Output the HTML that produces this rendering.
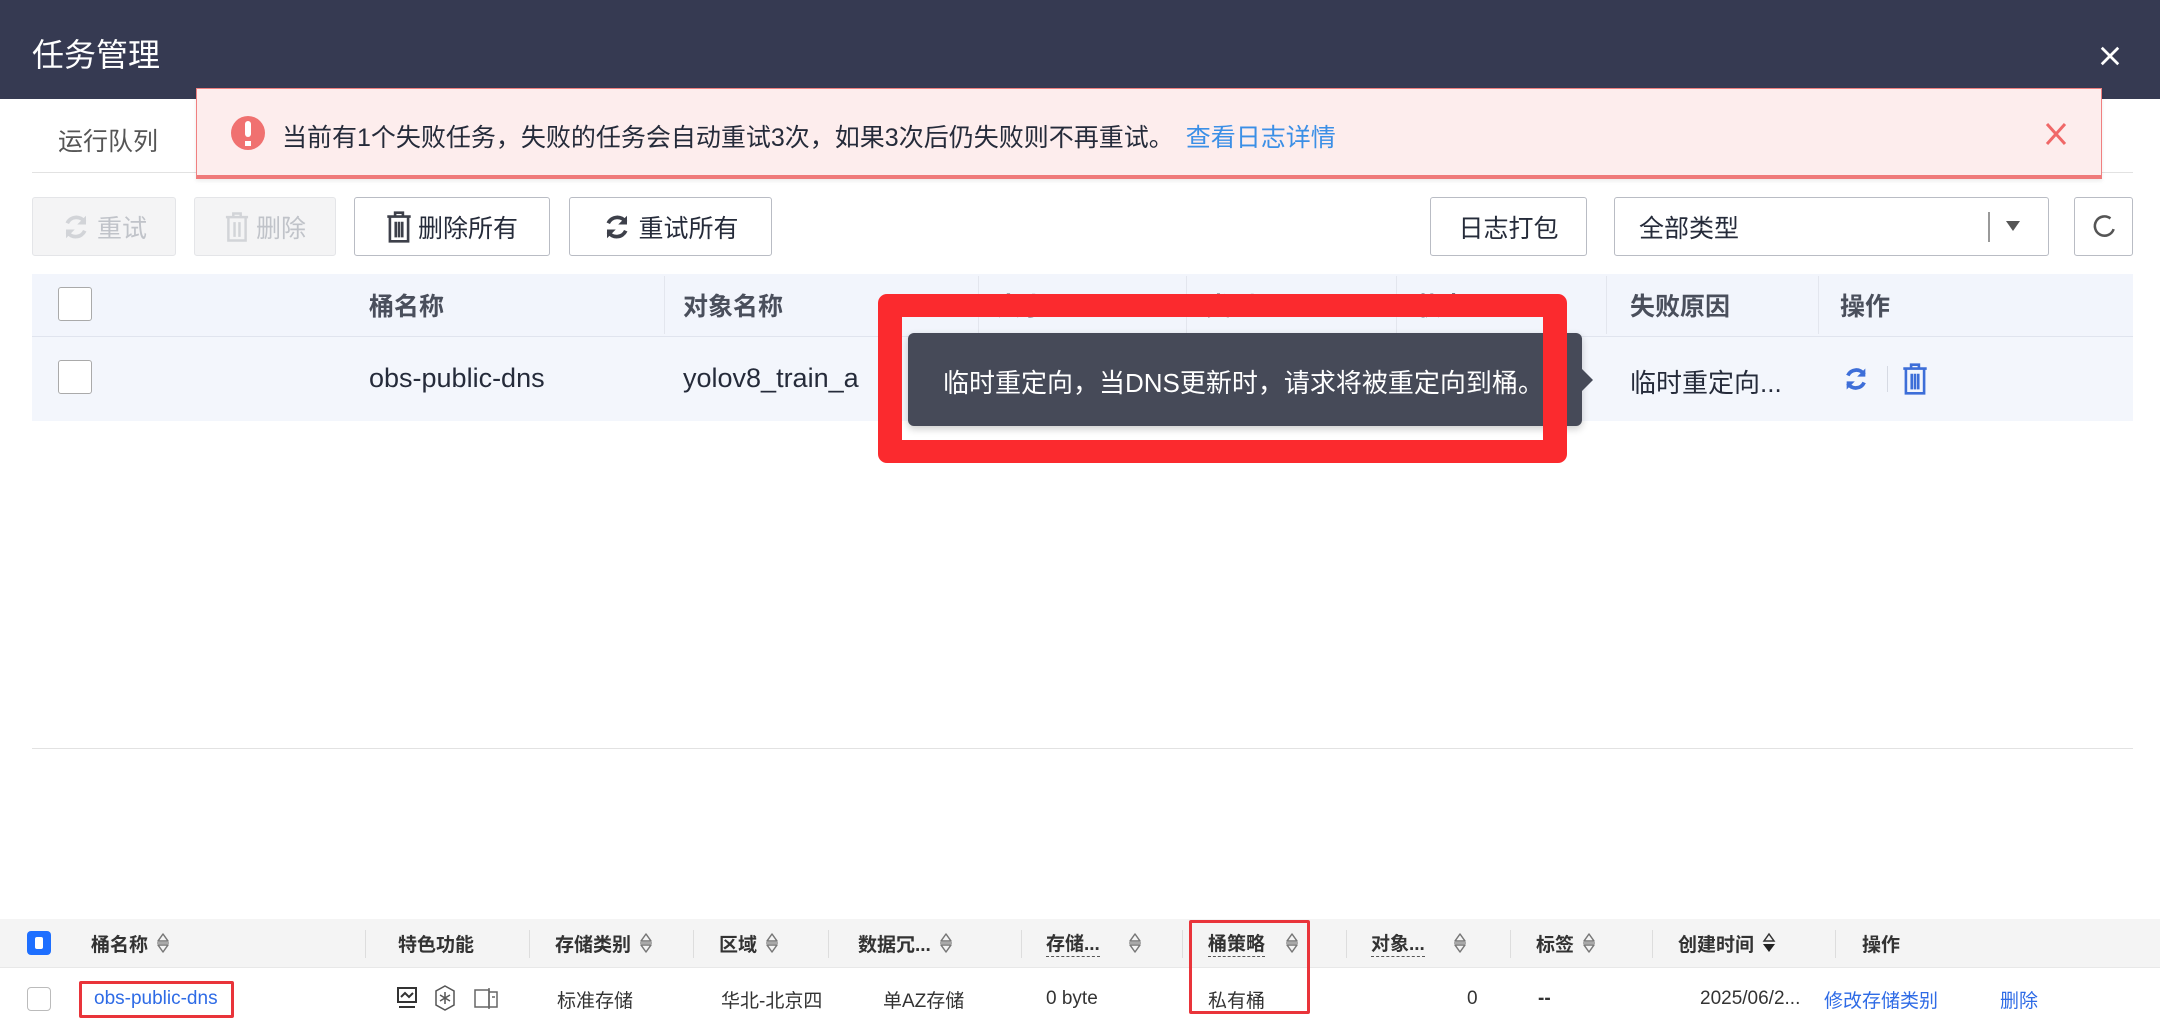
<!DOCTYPE html>
<html><head><meta charset="utf-8"><style>
*{margin:0;padding:0;box-sizing:border-box}
body{width:2160px;height:1021px;position:relative;overflow:hidden;background:#fff;font-family:"Liberation Sans","Noto Sans CJK SC",sans-serif;color:#252b3a}
.a{position:absolute;white-space:nowrap}
.btn{position:absolute;top:197px;height:59px;border:1.5px solid #b9bcc4;border-radius:3px;background:#fff;font-size:25px;color:#252b3a;display:flex;align-items:center;justify-content:center;gap:6px}
.dis{background:#f4f4f5;border-color:#e4e5e8;color:#c0c3c9}
.th{position:absolute;top:274px;height:62px;display:flex;align-items:center;font-size:25px;font-weight:bold;color:#4a4f5c}
.vd{position:absolute;top:276px;width:1px;height:58px;background:#e3e6ee}
.bh{position:absolute;top:919px;height:48px;display:flex;align-items:center;font-size:19px;font-weight:bold;color:#333;gap:8px}
.bd{position:absolute;top:930px;width:1px;height:28px;background:#ddd}
.br{position:absolute;top:980px;height:38px;display:flex;align-items:center;font-size:19px;color:#333}
.dash{border-bottom:1.5px dashed #555}
.s{display:inline-block;width:14px;height:22px}
</style></head><body>
<svg width="0" height="0" style="position:absolute"><defs><symbol id="srt" viewBox="0 0 14 22"><path d="M2 9L7 2L12 9ZM2 13L7 20L12 13Z" fill="none" stroke="#777" stroke-width="1.5" stroke-linejoin="round"/><path d="M1 11h12" stroke="#777" stroke-width="1.2"/></symbol></defs></svg>
<div class="a" style="left:0;top:0;width:2160px;height:99px;background:#363a52"></div>
<div class="a" style="left:32px;top:30px;font-size:32px;color:#fff">任务管理</div>
<svg class="a" style="left:2099px;top:45px" width="22" height="22" viewBox="0 0 24 24"><path d="M3 3L21 21M21 3L3 21" stroke="#fff" stroke-width="3"/></svg>

<div class="a" style="left:58px;top:122px;font-size:25px;color:#555">运行队列</div>
<div class="a" style="left:32px;top:172px;width:2101px;height:1px;background:#e2e2e2"></div>

<div class="a" style="left:196px;top:88px;width:1906px;height:91px;background:#fdeded;border:1.5px solid #f08080;border-bottom:4px solid #ef7a7a;box-shadow:0 2px 4px rgba(0,0,0,.08)"></div>
<div class="a" style="left:231px;top:116px;width:34px;height:34px;border-radius:50%;background:#f07170"></div>
<div class="a" style="left:245px;top:121px;width:6px;height:16px;background:#fff;border-radius:3px"></div>
<div class="a" style="left:245px;top:141px;width:6px;height:5px;background:#fff"></div>
<div class="a" style="left:282px;top:118px;font-size:25px;color:#252b3a">当前有1个失败任务，失败的任务会自动重试3次，如果3次后仍失败则不再重试。<span style="color:#3b8fe6;margin-left:12px">查看日志详情</span></div>
<svg class="a" style="left:2045px;top:122px" width="22" height="24" viewBox="0 0 22 24"><path d="M2 2L20 22M20 2L2 22" stroke="#f06868" stroke-width="3"/></svg>

<div class="btn dis" style="left:32px;width:144px"><svg width="30" height="30" viewBox="0 0 24 24"><path d="M19 8A8 8 0 0 0 5 9M5 16a8 8 0 0 0 14-1" stroke="#d2d4d8" stroke-width="3" fill="none"/><path d="M20 3v7h-7zM4 21v-7h7z" fill="#d2d4d8"/></svg>重试</div>
<div class="btn dis" style="left:194px;width:142px"><svg width="26" height="32" viewBox="0 0 20 26"><path d="M1 5h18M7 5V2h6v3M3 6v18h14V6M8 9v12M12 9v12" stroke="#d2d4d8" stroke-width="2" fill="none"/></svg>删除</div>
<div class="btn" style="left:354px;width:196px"><svg width="26" height="34" viewBox="0 0 20 26"><path d="M1 5h18M7 5V2h6v3M3 6v18h14V6M7.5 9v12M10 9v12M12.5 9v12" stroke="#3d404a" stroke-width="2" fill="none"/></svg>删除所有</div>
<div class="btn" style="left:569px;width:203px"><svg width="30" height="30" viewBox="0 0 24 24"><path d="M19 8A8 8 0 0 0 5 9M5 16a8 8 0 0 0 14-1" stroke="#3d404a" stroke-width="3" fill="none"/><path d="M20 3v7h-7zM4 21v-7h7z" fill="#3d404a"/></svg>重试所有</div>
<div class="btn" style="left:1430px;width:157px">日志打包</div>
<div class="btn" style="left:1614px;width:435px;justify-content:flex-start;padding-left:24px">全部类型</div>
<div class="a" style="left:1988px;top:212px;width:2px;height:30px;background:#999"></div>
<svg class="a" style="left:2006px;top:221px" width="14" height="10"><path d="M0 0h14L7 10z" fill="#555"/></svg>
<div class="btn" style="left:2074px;width:59px"><svg width="26" height="30" viewBox="0 0 24 28"><path d="M18 6A9 9 0 1 0 21 16" stroke="#555" stroke-width="2.4" fill="none"/></svg></div>

<div class="a" style="left:32px;top:274px;width:2101px;height:62px;background:#f2f5fc"></div>
<div class="a" style="left:32px;top:336px;width:2101px;height:1.5px;background:#e0e4ee"></div>
<div class="a" style="left:32px;top:337px;width:2101px;height:84px;background:#f3f6fc"></div>
<div class="a" style="left:58px;top:287px;width:34px;height:34px;border:1.5px solid #aaa;border-radius:3px;background:#fff"></div>
<div class="a" style="left:58px;top:360px;width:34px;height:34px;border:1.5px solid #aaa;border-radius:3px;background:#fff"></div>
<div class="vd" style="left:664px"></div><div class="vd" style="left:978px"></div><div class="vd" style="left:1186px"></div><div class="vd" style="left:1396px"></div><div class="vd" style="left:1606px"></div><div class="vd" style="left:1818px"></div>
<div class="th" style="left:369px">桶名称</div>
<div class="th" style="left:683px">对象名称</div>
<div class="th" style="left:996px">大小</div>
<div class="th" style="left:1206px">类型</div>
<div class="th" style="left:1416px">状态</div>
<div class="th" style="left:1630px">失败原因</div>
<div class="th" style="left:1840px">操作</div>
<div class="a" style="left:369px;top:363px;font-size:27px;color:#252b3a">obs-public-dns</div>
<div class="a" style="left:683px;top:363px;font-size:27px;color:#252b3a">yolov8_train_a</div>
<div class="a" style="left:1630px;top:363px;font-size:26px;color:#252b3a">临时重定向...</div>
<svg class="a" style="left:1842px;top:364px" width="28" height="30" viewBox="0 0 24 24"><path d="M19 8A8 8 0 0 0 5 9M5 16a8 8 0 0 0 14-1" stroke="#3d6ed8" stroke-width="3.2" fill="none"/><path d="M20 3v7h-7zM4 21v-7h7z" fill="#3d6ed8"/></svg>
<div class="a" style="left:1887px;top:366px;width:1px;height:26px;background:#d6dae3"></div>
<svg class="a" style="left:1902px;top:362px" width="26" height="34" viewBox="0 0 20 26"><path d="M1 5h18M7 5V2h6v3M3 6v18h14V6M7.5 9v12M10 9v12M12.5 9v12" stroke="#3d6ed8" stroke-width="2" fill="none"/></svg>

<div class="a" style="left:908px;top:333px;width:674px;height:93px;background:#464a58;border-radius:6px;box-shadow:0 3px 8px rgba(0,0,0,.2)"></div>
<svg class="a" style="left:1581px;top:368px" width="12" height="24"><path d="M0 0L12 12L0 24z" fill="#464a58"/></svg>
<div class="a" style="left:943px;top:363px;font-size:26px;color:#fff">临时重定向，当DNS更新时，请求将被重定向到桶。</div>
<div class="a" style="left:878px;top:294px;width:689px;height:169px;border:24px solid #fb2a2e;border-top-width:23px;border-bottom-width:23px;border-radius:9px"></div>

<div class="a" style="left:32px;top:748px;width:2101px;height:1px;background:#e2e2e2"></div>

<div class="a" style="left:0;top:919px;width:2160px;height:48px;background:#f4f4f4"></div>
<div class="a" style="left:0;top:967px;width:2160px;height:1px;background:#e8e8e8"></div>
<div class="a" style="left:27px;top:931px;width:24px;height:24px;background:#1e6fff;border-radius:4px"></div>
<div class="a" style="left:35px;top:937px;width:8px;height:12px;background:#fff;border-radius:2px"></div>
<div class="bd" style="left:365px"></div><div class="bd" style="left:529px"></div><div class="bd" style="left:693px"></div><div class="bd" style="left:828px"></div><div class="bd" style="left:1021px"></div><div class="bd" style="left:1182px"></div><div class="bd" style="left:1346px"></div><div class="bd" style="left:1510px"></div><div class="bd" style="left:1652px"></div><div class="bd" style="left:1835px"></div>
<div class="bh" style="left:91px">桶名称 <svg class="s"><use href="#srt"/></svg></div>
<div class="bh" style="left:398px">特色功能</div>
<div class="bh" style="left:555px">存储类别 <svg class="s"><use href="#srt"/></svg></div>
<div class="bh" style="left:719px">区域 <svg class="s"><use href="#srt"/></svg></div>
<div class="bh" style="left:858px">数据冗... <svg class="s"><use href="#srt"/></svg></div>
<div class="bh" style="left:1046px"><span class="dash">存储...</span> <svg class="s" style="margin-left:20px"><use href="#srt"/></svg></div>
<div class="bh" style="left:1208px"><span class="dash">桶策略</span> <svg class="s" style="margin-left:12px"><use href="#srt"/></svg></div>
<div class="bh" style="left:1371px"><span class="dash">对象...</span> <svg class="s" style="margin-left:20px"><use href="#srt"/></svg></div>
<div class="bh" style="left:1536px">标签 <svg class="s"><use href="#srt"/></svg></div>
<div class="bh" style="left:1678px">创建时间 <svg class="s" viewBox="0 0 14 22"><path d="M2 9L7 2L12 9Z" fill="none" stroke="#333" stroke-width="1.5"/><path d="M1 12L7 20L13 12Z" fill="#222"/></svg></div>
<div class="bh" style="left:1862px">操作</div>

<div class="a" style="left:27px;top:987px;width:24px;height:24px;border:1.5px solid #bbb;border-radius:4px;background:#fff"></div>
<div class="br" style="left:94px;color:#2e6be6">obs-public-dns</div>
<div class="a" style="left:79px;top:981px;width:155px;height:37px;border:3px solid #e9343a;border-radius:2px"></div>
<svg class="a" style="left:396px;top:986px" width="22" height="24" viewBox="0 0 22 24"><rect x="2" y="2" width="18" height="14" stroke="#333" stroke-width="2" fill="none"/><path d="M5 11l4-4 4 4 4-4M3 21h16" stroke="#333" stroke-width="2" fill="none"/></svg>
<svg class="a" style="left:434px;top:985px" width="22" height="26" viewBox="0 0 22 26"><path d="M11 1l9 5v14l-9 5-9-5V6z" stroke="#555" stroke-width="1.5" fill="none"/><path d="M11 7v12M6 10l10 6M16 10L6 16" stroke="#555" stroke-width="1.5"/></svg>
<svg class="a" style="left:474px;top:987px" width="24" height="22" viewBox="0 0 24 22"><rect x="1" y="3" width="14" height="17" stroke="#666" stroke-width="1.5" fill="none"/><path d="M15 1v21M15 5h8v15h-8M18 10h3" stroke="#666" stroke-width="1.5" fill="none"/></svg>
<div class="br" style="left:557px">标准存储</div>
<div class="br" style="left:721px">华北-北京四</div>
<div class="br" style="left:883px">单AZ存储</div>
<div class="br" style="left:1046px">0 byte</div>
<div class="br" style="left:1208px">私有桶</div>
<div class="br" style="left:1467px">0</div>
<div class="br" style="left:1538px;font-weight:bold">--</div>
<div class="br" style="left:1700px">2025/06/2...</div>
<div class="br" style="left:1824px;color:#2e6be6">修改存储类别</div>
<div class="br" style="left:2000px;color:#2e6be6">删除</div>
<div class="a" style="left:1189px;top:920px;width:121px;height:94px;border:3px solid #e9343a;border-radius:2px"></div>
</body></html>
